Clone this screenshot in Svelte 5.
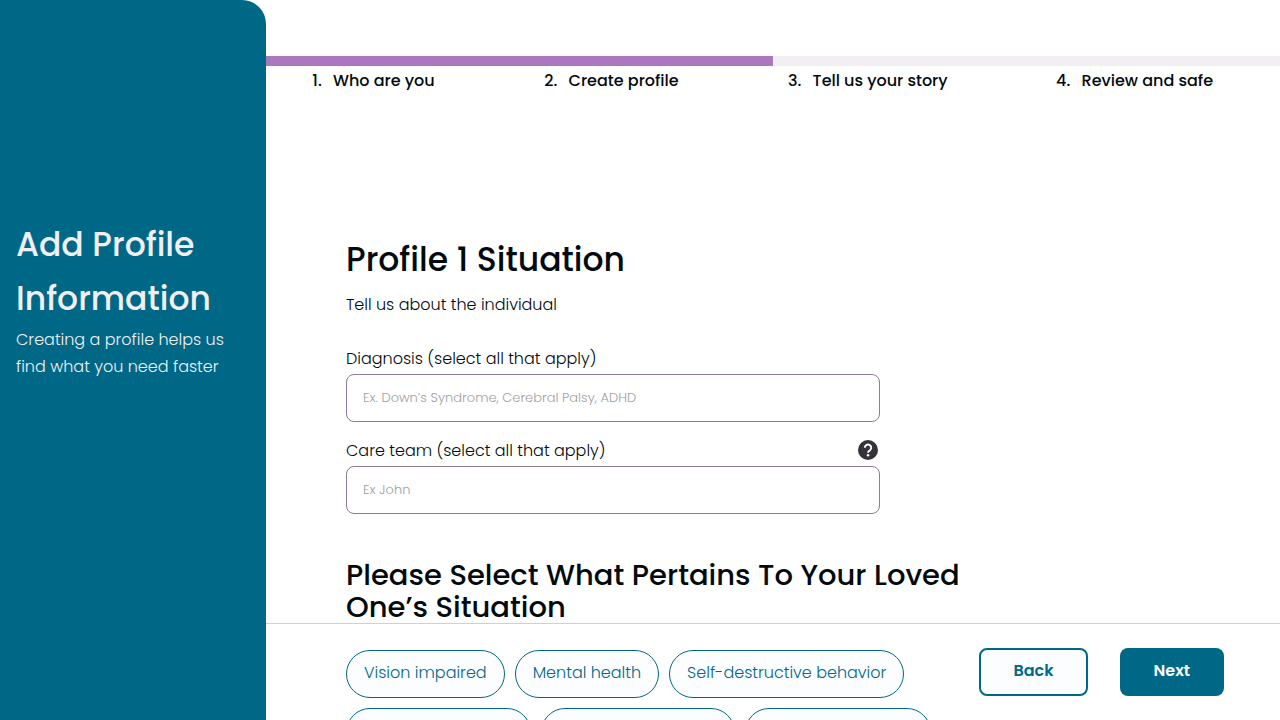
<script>
  const steps = ['Who are you', 'Create profile', 'Tell us your story', 'Review and safe'];
  const progress = 50;

  let situations = $state([
    { label: 'Vision impaired', selected: false },
    { label: 'Mental health', selected: false },
    { label: 'Self-destructive behavior', selected: false },
    { label: 'Physically disabled', selected: false },
    { label: 'Speech impairment', selected: false },
    { label: 'Wheelchair access', selected: false }
  ]);
</script>

<div class="page">
  <aside class="sidebar">
    <h2>Add Profile Information</h2>
    <p>Creating a profile helps us find what you need faster</p>
  </aside>

  <main class="main">
    <header class="progress">
      <div class="track"><div class="bar" style="width: {progress}%"></div></div>
      <ol class="steps">
        {#each steps as step}
          <li>{step}</li>
        {/each}
      </ol>
    </header>

    <form class="content" onsubmit={(e) => e.preventDefault()}>
      <h1>Profile 1 Situation</h1>
      <p class="intro">Tell us about the individual</p>

      <div class="field">
        <div class="label-row">
          <label for="diagnosis">Diagnosis (select all that apply)</label>
        </div>
        <input id="diagnosis" type="text" placeholder="Ex. Down’s Syndrome, Cerebral Palsy, ADHD" />
      </div>

      <div class="field">
        <div class="label-row">
          <label for="care-team">Care team (select all that apply)</label>
          <button class="help" type="button" aria-label="Help">
            <svg viewBox="0 0 20 20" width="20" height="20" aria-hidden="true">
              <circle cx="10" cy="10" r="10" fill="#36313a" />
              <path d="M6.800 7.800a3.200 3.200 0 1 1 5.200 2.500C10.900 11.200 10 11.500 10 12.800" fill="none" stroke="#fff" stroke-width="1.900" />
              <circle cx="10" cy="15.200" r="1.250" fill="#fff" />
            </svg>
          </button>
        </div>
        <input id="care-team" type="text" placeholder="Ex John" />
      </div>

      <h2>Please Select What Pertains To Your Loved One’s Situation</h2>
      <div class="chips">
        {#each situations as item}
          <button
            class="chip"
            class:selected={item.selected}
            type="button"
            aria-pressed={item.selected}
            onclick={() => (item.selected = !item.selected)}
          >{item.label}</button>
        {/each}
      </div>
    </form>

    <footer class="actions">
      <button class="action" type="button">Back</button>
      <button class="action primary" type="button">Next</button>
    </footer>
  </main>
</div>

<style>
  .page {
    display: flex;
    height: 100vh;
    overflow: hidden;
    background: #fff;
    color: #020a0e;
    font-family: Poppins, Inter, sans-serif;
    font-size: 16px;
    font-weight: 300;
    line-height: 27px;
  }

  h1,
  h2,
  p {
    margin: 0;
  }

  button,
  input {
    box-sizing: border-box;
    font: inherit;
    margin: 0;
  }

  button {
    cursor: pointer;
  }

  .sidebar {
    box-sizing: border-box;
    flex: 0 0 266px;
    padding: 218px 16px 0;
    border-top-right-radius: 24px;
    background: #006887;
    color: #f2eff3;
  }

  .sidebar h2 {
    font-size: 33px;
    font-weight: 500;
    line-height: 54px;
  }

  .main {
    position: relative;
    flex: 1;
    min-width: 0;
    overflow: hidden;
  }

  .progress {
    padding-top: 56px;
  }

  .track {
    height: 10px;
    background: #f2eff3;
  }

  .bar {
    height: 100%;
    background: #ad77c0;
  }

  .steps {
    display: flex;
    justify-content: space-around;
    margin: 0;
    padding: 1px 0 0;
    font-weight: 500;
  }

  .steps li::marker {
    content: counter(list-item) '.\2002\2009';
  }

  .content {
    max-width: 640px;
    padding: 144px 32px 120px 80px;
  }

  h1 {
    font-size: 33px;
    font-weight: 500;
    line-height: 44px;
  }

  .intro {
    margin: 9px 0 27px;
  }

  .field {
    max-width: 534px;
    margin-bottom: 15px;
  }

  .label-row {
    display: flex;
    align-items: center;
    justify-content: space-between;
    margin-bottom: 2px;
  }

  .help {
    display: flex;
    margin: 0 2px 2px 0;
    padding: 0;
    border: 0;
    background: none;
  }

  input {
    display: block;
    width: 100%;
    height: 48px;
    padding: 0 16px;
    border: 1px solid #8b7b93;
    border-radius: 8px;
    background: #fff;
    color: #020a0e;
    font-size: 13px;
  }

  input::placeholder {
    color: #a0a0a0;
    opacity: 1;
  }

  .content h2 {
    margin-top: 45px;
    font-size: 29px;
    font-weight: 500;
    line-height: 32px;
  }

  .chips {
    display: flex;
    flex-wrap: wrap;
    gap: 10px;
    margin-top: 27px;
  }

  .chip {
    height: 48px;
    padding: 0 17px 3px;
    border: 1px solid #006887;
    border-radius: 24px;
    background: #fcfdff;
    color: #006887;
  }

  .chip.selected {
    background: #006887;
    color: #fcfdff;
  }

  .actions {
    position: absolute;
    right: 0;
    bottom: 0;
    left: 0;
    display: flex;
    justify-content: flex-end;
    gap: 32px;
    padding: 24px 56px;
    border-top: 1px solid #d0d0d0;
    pointer-events: none;
  }

  .action {
    height: 48px;
    padding: 0 32px 3px;
    border: 2px solid #006887;
    border-radius: 8px;
    background: #fcfdff;
    color: #006887;
    font-weight: 600;
    pointer-events: auto;
  }

  .action.primary {
    background: #006887;
    color: #fcfdff;
  }
</style>
